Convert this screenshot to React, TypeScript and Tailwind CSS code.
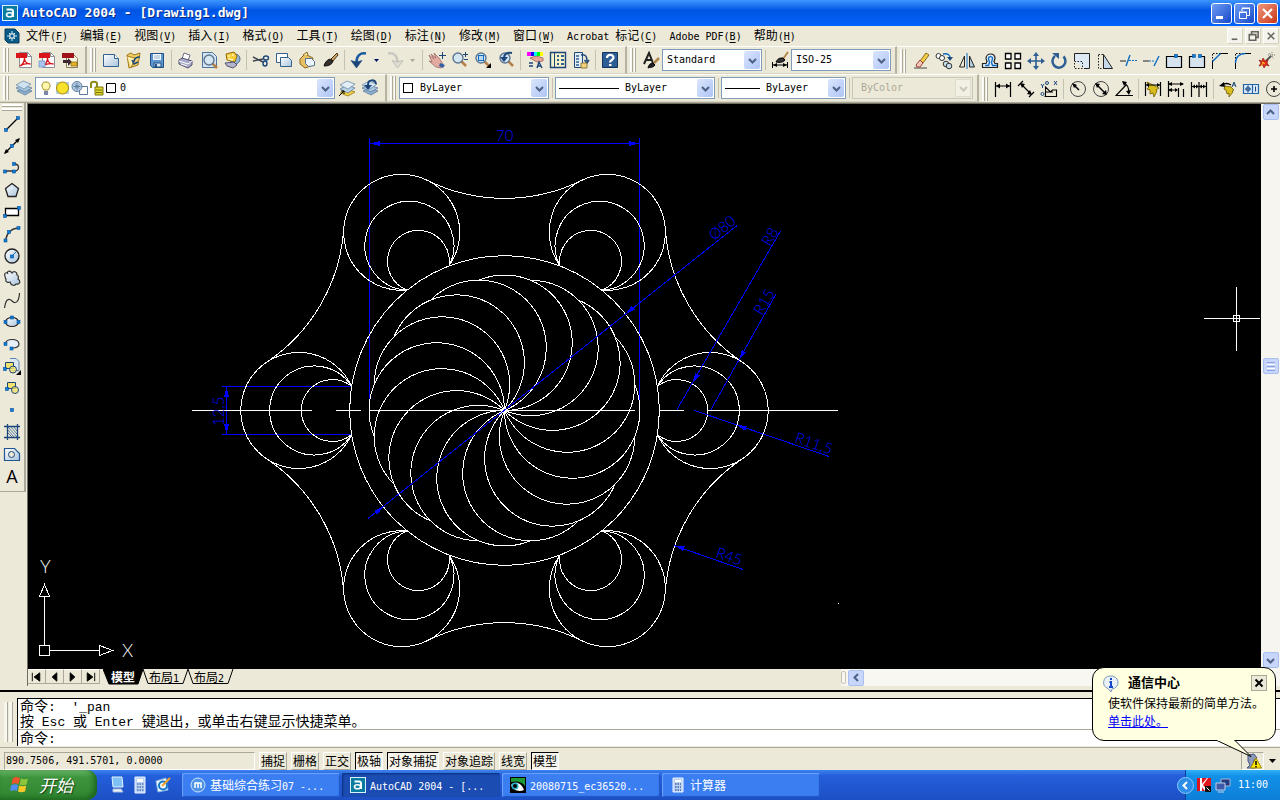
import React from 'react';

/* ---------- text helpers ---------- */

// Latin runs use the narrow fixed pitch face, CJK runs keep the parent size
const Mixed: React.FC<{ text: string; size?: 'sm' | 'lg' }> = ({ text, size = 'sm' }) => (
  <>
    {text.split(/([\u3000-\uffff]+)/).map((part, i) =>
      i % 2 === 1 ? (
        <span key={i}>{part}</span>
      ) : (
        <span
          key={i}
          className={
            size === 'sm'
              ? "font-['DejaVu_Sans_Mono',monospace] text-[10px] whitespace-pre"
              : "font-['Liberation_Mono',monospace] text-[13px] whitespace-pre"
          }
        >
          {part}
        </span>
      )
    )}
  </>
);

/* ---------- toolbar parts ---------- */

const Grip = () => (
  <div className="flex gap-px ml-[3px] mr-[3px] w-[6px] h-6 shrink-0">
    <div className="flex-1 bg-[#f7f6ee] border-l border-white border-r border-r-[#aca899]" />
    <div className="flex-1 bg-[#f7f6ee] border-l border-white border-r border-r-[#aca899]" />
  </div>
);

const Sep = () => (
  <div className="w-[6px] shrink-0 flex justify-center">
    <div className="w-px h-5 bg-[#c5c2b0]" />
  </div>
);

const Bar: React.FC<{ children: React.ReactNode; last?: boolean }> = ({ children, last }) => (
  <div
    className={
      last
        ? 'flex items-center h-7 shrink-0 border-t border-white'
        : 'flex items-center h-7 shrink-0 pr-1 border-t border-white border-b border-b-[#d5d2c0] border-r-2 border-r-[#b5b2a2]'
    }
  >
    <Grip />
    {children}
  </div>
);

const Ico: React.FC<{ children: React.ReactNode }> = ({ children }) => (
  <svg width="18" height="18" viewBox="0 0 18 18" fill="none" stroke="#000" aria-hidden="true" className="shrink-0">
    {children}
  </svg>
);

const Tool: React.FC<{ name: string }> = ({ name }) => (
  <button aria-label={name} className="w-[23px] h-[22px] shrink-0 flex items-center justify-center">
    <Ico>{icons[name]}</Ico>
  </button>
);

const DropArrow: React.FC<{ off?: boolean }> = ({ off }) => (
  <button aria-label="More" className="w-[13px] h-5 shrink-0 flex items-center justify-center">
    <svg width="5" height="3" viewBox="0 0 5 3">
      <path d="M0 0h5L2.5 3z" fill={off ? '#aca899' : '#001060'} />
    </svg>
  </button>
);

const Chevron: React.FC<{ dir?: string; off?: boolean }> = ({ dir = 'down', off }) => (
  <svg width="9" height="9" viewBox="0 0 9 9" fill="none" stroke={off ? '#c9c7ba' : '#4d6185'} strokeWidth="2">
    <path d={dir === 'up' ? 'M1 6l3.5-3.5L8 6' : dir === 'left' ? 'M6 1L2.5 4.5 6 8' : 'M1 3l3.5 3.5L8 3'} />
  </svg>
);

const Combo: React.FC<{
  label: string;
  value: string;
  width: string;
  pad: string;
  off?: boolean;
  children?: React.ReactNode;
}> = ({ label, value, width, pad, off, children }) => (
  <div className={`relative shrink-0 h-[22px] ${width}`}>
    <select
      aria-label={label}
      disabled={off}
      className={`appearance-none w-full h-full border font-['DejaVu_Sans_Mono',monospace] text-[10px] ${pad} ${
        off ? 'bg-[#ece9d8] border-[#c9c7ba] text-[#aca899] opacity-100' : 'bg-white border-[#7f9db9] text-black'
      }`}
    >
      <option>{value}</option>
    </select>
    <div className="absolute left-1 inset-y-0 flex items-center pointer-events-none">{children}</div>
    <div
      className={
        off
          ? 'absolute right-[2px] top-[2px] bottom-[2px] w-[16px] flex items-center justify-center pointer-events-none border border-[#dedccc] bg-[#f3f1e6]'
          : 'absolute right-[2px] top-[2px] bottom-[2px] w-[16px] flex items-center justify-center pointer-events-none rounded-[2px] bg-linear-to-br from-[#dbe6fd] to-[#aec4f4]'
      }
    >
      <Chevron off={off} />
    </div>
  </div>
);

/* ---------- icons, drawn on an 18 unit grid ---------- */

const blue = '#0b6cc4';
const navy = '#1c4679';

const dot = (x: number, y: number) => (
  <rect x={x - 1.5} y={y - 1.5} width="3" height="3" fill="#0a80dc" stroke="#0b4f98" strokeWidth=".6" />
);
const pdfPage = (
  <>
    <path d="M4.5 1.5h8l4 4v11h-12z" fill="#fff" stroke="#8a8f98" />
    <path d="M12.5 1.5v4h4" stroke="#8a8f98" />
    <path d="M1 2h11v5H1z" fill="#d9141a" stroke="none" />
    <path d="M5 15c3-2 4.5-5 4.5-8 0 4 3 6 6 6-3.5-.8-7 0-10.5 2z" stroke="#d9141a" strokeWidth="1.3" />
  </>
);
const lens = (x: number, y: number) => (
  <>
    <path d={`M${x + 3} ${y + 3}l5 5`} stroke="#b6804a" strokeWidth="2.5" />
    <circle cx={x} cy={y} r="5" fill="#d5e6f3" stroke="#5d7690" strokeWidth="1.4" />
  </>
);
const stack = (
  <>
    <path d="M2 12l7-3 8 3-7 4z" fill="#8fb0cf" stroke="#5d7f9f" strokeWidth=".8" />
    <path d="M1 9l7-3 9 3-7 4z" fill="#a9c5de" stroke="#5d7f9f" strokeWidth=".8" />
    <path d="M1 6l7-4 8 3-7 5z" fill="#d0e2f0" stroke="#6f8ead" strokeWidth=".8" />
  </>
);

const icons: Record<string, React.ReactNode> = {
  pdf: pdfPage,
  pdfMail: (
    <>
      {pdfPage}
      <path d="M1 10h6v6H1z" fill="#aac6ee" stroke="#6e93c8" strokeWidth=".7" />
    </>
  ),
  pdfReview: (
    <>
      <path d="M5.5 3.5h7l4 4v9h-11z" fill="#f8f4e2" stroke="#8a7d55" />
      <path d="M1 2h12v5H1z" fill="#a01218" stroke="none" />
      <path d="M2 9h5V7l4 4-4 4v-3H2z" fill="#3c2430" stroke="none" />
      <path d="M10 11h6v4h-6z" fill="#e6b325" stroke="#86640b" strokeWidth=".7" />
    </>
  ),
  new: (
    <>
      <path d="M1.5 3.5h11l4 4v8h-15z" fill="url(#paper)" stroke="#33608c" />
      <path d="M12.5 3.5v4h4" stroke="#33608c" fill="#fff" />
    </>
  ),
  open: (
    <>
      <path d="M2 4l4-2 3 2 6-2-2 12-9 3z" fill="#f0cf68" stroke="#a17817" />
      <path d="M2 5l8 2-4 10" fill="#fff0ae" stroke="#a17817" />
      <path d="M15 6c-5 0-6 3-6 5M7 9l2 4 4-2" stroke={navy} strokeWidth="1.5" />
    </>
  ),
  save: (
    <>
      <path d="M2.5 2.5h13v14h-11l-2-2z" fill="#5d96cf" stroke="#235086" />
      <path d="M5 3h8v6H5z" fill="#f4f9ff" stroke="none" />
      <path d="M6 5h6M6 7h6" stroke="#9cb6cf" />
      <path d="M6 12h7v4H6z" fill="#d9e6f2" stroke="#235086" />
      <path d="M8 13v3" stroke="#235086" strokeWidth="2" />
    </>
  ),
  print: (
    <>
      <path d="M5 8l2-6 6 2-2 6z" fill="#fff" stroke="#6d6d88" />
      <path d="M2 9l3-2 10 3v4l-4 3-9-4z" fill="#a9a9c9" stroke="#4f4f70" />
      <path d="M2 10l9 3 4-3M4 13l6 2" stroke="#fff" />
    </>
  ),
  preview: (
    <>
      <path d="M2.5 1.5h10l4 4v11h-14z" fill="#d4e6f5" stroke="#4d7399" />
      {lens(9, 9)}
    </>
  ),
  publish: (
    <>
      <circle cx="12" cy="8" r="5" fill="#93b7dc" stroke="#516a80" />
      <path d="M3 3l8-2 3 4-2 6-8-2z" fill="#f6ce38" stroke="#90690b" />
      <path d="M5 5h2M9 4h2M5 8l5 1" stroke="#fff3bf" strokeWidth="1.5" />
      <path d="M2 12l9-1 3 3-4 3-6-2z" fill="#b5b5ce" stroke="#555572" />
    </>
  ),
  cut: (
    <>
      <path d="M1 6l10 5M1 10l10-2" stroke="#3c4350" strokeWidth="1.5" />
      <ellipse cx="14" cy="7" rx="2.5" ry="2" stroke={navy} strokeWidth="1.4" />
      <ellipse cx="13" cy="12.5" rx="2" ry="2.5" stroke={navy} strokeWidth="1.4" />
    </>
  ),
  copy: (
    <>
      <path d="M1.5 2.5h11v9h-11z" fill="#fff" stroke="#33608c" />
      <path d="M5.5 6.5h8l3 3v6h-11z" fill="url(#paper)" stroke="#33608c" />
    </>
  ),
  paste: (
    <>
      <path d="M2 8l5-5 8 4-2 8-6 2-5-4z" fill="#e7c064" stroke="#8a6a1a" />
      <path d="M5 4l4-3 1 3" fill="#f7e7a8" stroke="#8a6a1a" />
      <path d="M7.5 7.5h6l3 3v4l-6 1-3-3z" fill="#eef6fd" stroke="#54718e" />
    </>
  ),
  match: (
    <>
      <path d="M10 8l6-6 1 2-5 6z" fill="#c9a36d" stroke="#4a3418" />
      <path d="M3 15c1-4 3-6 6-7l3 2c-1 4-5 5-9 5z" fill="#33302c" stroke="#111" />
    </>
  ),
  undo: (
    <>
      <path d="M16 2.5C10 1.5 6.5 5 6.5 11" stroke="#1e5a9e" strokeWidth="2.5" />
      <path d="M1 9.5l5.5 1.5L12 9.5 6.5 17z" fill={navy} stroke={navy} strokeWidth=".6" />
    </>
  ),
  redo: (
    <>
      <path d="M2 2.5C8 1.5 11.5 5 11.5 11" stroke="#c8c8c0" strokeWidth="2.5" />
      <path d="M6 9.5l5.5 1.5L17 9.5 11.5 17z" fill="#deddd2" stroke="#c0c0b8" />
    </>
  ),
  pan: (
    <>
      <path d="M1 4l5 4-3-5 5 4-2-5 5 5 4 6-2 4-5-1-7-6 3 1z" fill="#e3aaa0" stroke="#9c6a62" strokeWidth=".8" />
      <path d="M12 12l5 2-2 3-4-2z" fill="#345fa2" stroke="none" />
      <path d="M14.5 1v7M11 4.5h7" stroke={navy} />
    </>
  ),
  zoomRt: (
    <>
      {lens(7, 7)}
      <path d="M14.5 1v5M12 3.5h5M13 8.5h4" stroke={navy} />
    </>
  ),
  zoomWin: (
    <>
      {lens(7, 7)}
      <rect x="4.5" y="4.5" width="5" height="5" fill="#bcd9f2" stroke={blue} />
      <path d="M17 12v5h-5z" fill="#000" stroke="none" />
    </>
  ),
  zoomPrev: (
    <>
      {lens(8, 7)}
      <path d="M15 2C10 1 7 3 7 7" stroke={navy} strokeWidth="2" />
      <path d="M3 6h8l-4 5z" fill={navy} stroke="none" />
    </>
  ),
  props: (
    <>
      <path d="M1 1h4v4H1z" fill="#f0f" stroke="none" />
      <path d="M5 1h3v4H5z" fill="#20f" stroke="none" />
      <path d="M8 1h3v4H8z" fill="#0ff" stroke="none" />
      <path d="M11 1h3v4h-3z" fill="#0f0" stroke="none" />
      <path d="M14 1h3v4h-3z" fill="#ff0" stroke="none" />
      <path d="M4 7l6-2 7 2v3l-6 1z" fill="#e9a79a" stroke="#9a6054" strokeWidth=".8" />
      <path d="M3 12h4M3 15h4M11 17l2-6 3 6M12 15h3" stroke={navy} strokeWidth="1.4" />
    </>
  ),
  design: (
    <>
      <path d="M1.5 1.5h15v15h-15z" fill="#f6f2c8" stroke={navy} strokeWidth="1.4" />
      <path d="M5.5 2v14" stroke={navy} />
      <path d="M8 5h2M12 5h3M8 9h2M12 9h3M8 13h2M12 13h3" stroke="#33618f" strokeWidth="2" />
    </>
  ),
  palettes: (
    <>
      <path d="M2.5 1.5h8v15h-8z" fill="#e4eef7" stroke={navy} />
      <path d="M4 5h3M4 8h3M4 11h3M4 14h3" stroke="#33618f" strokeWidth="1.5" />
      <path d="M9 4c5-1 6 2 6 6M12.5 9l2.5 3 2-3" stroke={navy} strokeWidth="1.5" />
      <path d="M9 12h6v5H9z" fill="#f1d27a" stroke="#7a6426" strokeWidth=".8" />
    </>
  ),
  help: (
    <>
      <path d="M1.5 1.5h15v15h-15z" fill="#2e5e93" stroke="#12355f" />
      <path d="M6 7c0-4 6.5-4 6.5-.5C12.5 9 9 9 9 11.5" stroke="#fff" strokeWidth="2.2" />
      <path d="M8 13h2.5v2H8z" fill="#fff" stroke="none" />
    </>
  ),
  textStyle: (
    <>
      <path d="M2 13L7 2l4 10M4 9h6" stroke="#222" strokeWidth="2" />
      <path d="M17 7l-5 5" stroke="#b3854d" strokeWidth="2.5" />
      <path d="M6 17c1-4 3-5 5-5l2 2c-2 3-5 2-7 3z" fill="#222" />
    </>
  ),
  dimStyle: (
    <>
      <path d="M17 1l-5 7" stroke="#b3854d" strokeWidth="2" />
      <path d="M5 11c2-4 4-4 7-4l2 2c-1 2-5 3-9 2z" fill="#333" />
      <path d="M1.5 11v6M16.5 11v6M2 14h14" />
      <path d="M2 14l4-2v4zM16 14l-4-2v4z" fill="#000" stroke="none" />
    </>
  ),
  erase: (
    <>
      <path d="M2 16h13" stroke="#444" />
      <path d="M8 9l6-8 3 2-6 8z" fill="#f5cb4a" stroke="#8f6d15" />
      <path d="M4 13l4-5 3 3-3 4H5z" fill="#f6c9bc" stroke="#9c3c30" />
    </>
  ),
  dup: (
    <>
      <circle cx="3.5" cy="4" r="2.5" fill="#fff" stroke="#333" />
      <circle cx="7" cy="6" r="2.5" fill="#fff" stroke="#333" />
      <circle cx="11" cy="12" r="2.8" fill="#c6daea" stroke="#333" />
      <circle cx="14" cy="14" r="2.8" fill="#c6daea" stroke="#333" />
      <path d="M8 2c5-1 7 1 7 4" stroke={blue} strokeWidth="1.5" />
      <path d="M12 5h6l-3 4z" fill={navy} stroke="none" />
    </>
  ),
  mirror: (
    <>
      <path d="M6.5 4v11H1.5z" stroke="#222" />
      <path d="M11.5 4v11h5z" fill="#b5cfe5" stroke="#222" />
      <path d="M9 1v16" stroke={blue} />
    </>
  ),
  offset: (
    <>
      <path d="M1.5 15.5v-4H5l1-2-1-3c0-6 9-6 9 0l-1 3 1 2h2.5v4z" fill="#dfe9f2" stroke="#222" strokeWidth="1.2" />
      <path d="M4 13.5h3.5l1-3-1-4c0-2.5 4-2.5 4 0l-1 4 1 3H16" stroke={blue} strokeWidth="1.3" />
    </>
  ),
  array: (
    <path
      d="M1.5 1.5H7V7H1.5zM11 1.5h5.5V7H11zM1.5 11H7v5.5H1.5zM11 11h5.5v5.5H11z"
      fill="#fff"
      strokeWidth="1.3"
    />
  ),
  move: (
    <>
      <path d="M9 2v14M2 9h14" stroke="#2e5e93" strokeWidth="1.6" />
      <path d="M9 0l3 4H6zM9 18l3-4H6zM0 9l4-3v6zM18 9l-4-3v6z" fill="#2e5e93" stroke="none" />
    </>
  ),
  rotate: (
    <>
      <path d="M5 4a6.5 6.5 0 1 0 8.5.5" stroke="#2e5e93" strokeWidth="2.5" />
      <path d="M2 1h7v6z" fill="#2e5e93" stroke="none" />
    </>
  ),
  scale: (
    <>
      <path d="M1.5 9V1.5h15v15H11" fill="#dde9f3" stroke="#222" />
      <path d="M1.5 9.5h8v7h-8z" stroke="#222" strokeDasharray="1.5 1.5" />
    </>
  ),
  stretch: (
    <>
      <path d="M2.5 2.5h5v14h-5z" stroke="#222" strokeDasharray="1.5 1.5" />
      <path d="M7.5 2.5l9 14h-9z" fill="#c6daea" stroke="#222" />
    </>
  ),
  trim: (
    <>
      <path d="M1 9h6" stroke="#222" />
      <path d="M7 14l4-11" stroke={blue} strokeWidth="1.4" />
      <path d="M10 8.5h8" stroke={blue} strokeDasharray="2 1" />
    </>
  ),
  extend: (
    <>
      <path d="M1 9h6" stroke="#222" />
      <path d="M7 9h6" stroke={blue} strokeDasharray="2 1" />
      <path d="M12 14l5-10" stroke={blue} strokeWidth="1.4" />
    </>
  ),
  breakPt: (
    <>
      <path d="M1.5 4.5h15v11h-15z" fill="#d5e3ef" strokeWidth="1.2" />
      {dot(11, 4)}
    </>
  ),
  breakAt: (
    <>
      <path d="M6 4.5H1.5v11h15v-11H12" fill="#d5e3ef" strokeWidth="1.2" />
      {dot(6, 4)}
      {dot(12, 4)}
    </>
  ),
  chamfer: (
    <>
      <path d="M2 1.5h8M1.5 2v8" strokeDasharray="1.5 1.5" />
      <path d="M1.5 17V9M9 1.5h8" />
      <path d="M1.5 9.5l8-8" stroke={blue} strokeWidth="1.4" />
    </>
  ),
  fillet: (
    <>
      <path d="M2 1.5h8M1.5 2v8" strokeDasharray="1.5 1.5" />
      <path d="M1.5 17v-6M11 1.5h6" />
      <path d="M1.5 11c0-6 4-9.5 10-9.5" stroke={blue} strokeWidth="1.4" />
    </>
  ),
  explode: (
    <>
      <path d="M14 4l-5 5" stroke="#555" strokeWidth="2" />
      <path d="M2 8l3 1 1-3 2 3 3-1-1 3 2 3-3-1-2 3-1-3-4 1 2-3z" fill="#e2271b" stroke="#8f1c0d" strokeWidth=".7" />
      <path d="M5 10l3 2M4 14l3-4" stroke="#ffc21a" />
      <path d="M11 3h7M12 1l5 6M15 0v6" stroke="#7a7a7a" strokeDasharray="1 1" />
    </>
  ),
  layers: stack,
  layerMake: (
    <>
      <path d="M2 14l7-4 8 3-7 4z" fill="#f1cf3d" stroke="#957b16" strokeWidth=".8" />
      <path d="M2 10l7-4 8 3-7 5z" fill="#b9d0e4" stroke="#5d7f9f" strokeWidth=".8" />
      <path d="M2 6l7-4 8 3-7 5z" fill="#e3eef7" stroke="#6f8ead" strokeWidth=".8" />
      <path d="M1 17l5-5M3 12h3v3" stroke="#000" />
    </>
  ),
  layerPrev: (
    <>
      {stack}
      <path d="M15 5C14 0 7 0 7 6" stroke={navy} strokeWidth="2" />
      <path d="M3 6h8l-4 5z" fill={navy} stroke="none" />
    </>
  ),
  dLinear: (
    <>
      <path d="M1.5 2v15M16.5 2v15M2 6h14" strokeWidth="1.2" />
      <path d="M2 6l4-2.5v5zM16 6l-4-2.5v5z" fill="#000" stroke="none" />
    </>
  ),
  dAligned: (
    <>
      <path d="M1 6l5-5M12 17l5-5M4 4l10 10" strokeWidth="1.2" />
      <path d="M3 3l5 1-3 4zM15 15l-5-1 3-4z" fill="#000" stroke="none" />
    </>
  ),
  dOrdinate: (
    <>
      <path d="M5.5 16.5V7l5 5 2-2h4v6.5h-12M5 12h8" strokeWidth="1.1" />
      <path d="M1 4l1.5 2L4 4M2.5 6v2M14 1l3 4M17 1l-3 4" stroke={navy} />
      <circle cx="7" cy="3" r="1.5" stroke={navy} />
      <circle cx="2.5" cy="14" r="1.5" stroke={navy} />
    </>
  ),
  dRadius: (
    <>
      <circle cx="9" cy="9" r="7.5" stroke="#444" />
      <path d="M10 10L5 5" strokeWidth="1.5" />
      <path d="M3 3l5 2-3 3z" fill="#000" stroke="none" />
    </>
  ),
  dDiameter: (
    <>
      <circle cx="9" cy="9" r="7.5" stroke="#444" />
      <path d="M5 5l8 8" strokeWidth="1.5" />
      <path d="M3 3l5 1-3 4zM15 15l-5-1 4-4z" fill="#000" stroke="none" />
    </>
  ),
  dAngular: (
    <>
      <path d="M18 15.5H1L11 5M8 2c4 2 6 6 6 11" strokeWidth="1.2" />
      <path d="M7 1l5 1-3 4zM14 15l-3-4 5-1z" fill="#000" stroke="none" />
    </>
  ),
  dQuick: (
    <>
      <path d="M3 2l6 3 6 3-3 2 1 1-3 6-1-4-3 1v-4L3 9l2-2z" fill="#d9bd1c" stroke="#6e5a00" strokeWidth=".8" />
      <path d="M1.5 2v14M16.5 2v14M2 5h14" strokeWidth="1.2" />
      <path d="M2 5l3-2v4zM16 5l-3-2v4z" fill="#000" stroke="none" />
    </>
  ),
  dBaseline: (
    <>
      <path d="M1.5 1v16M2 4h14M2 10h8M11.5 8v9M16.5 9v8" strokeWidth="1.2" />
      <path d="M1 4l4-2v4zM17 4l-4-2v4zM1 10l4-2v4zM11 10L8 8v4z" fill="#000" stroke="none" />
    </>
  ),
  dContinue: (
    <>
      <path d="M1.5 2v15M9 2v15M16.5 2v15M2 6.5h14" strokeWidth="1.2" />
      <path d="M2 6.5l3-2v4zM9 6.5l-3-2v4zM9 6.5l3-2v4zM16 6.5l-3-2v4z" fill="#000" stroke="none" />
    </>
  ),
  leader: (
    <>
      <path d="M6 6l6 1 3 3-2 1 1 1-4 5v-4l-2 1-1-4-2-1z" fill="#d9bd1c" stroke="#6e5a00" strokeWidth=".8" />
      <path d="M3 5c3-2 6-2 9 0" strokeWidth="1.3" />
      <path d="M0 6l5-4 1 5z" fill="#000" stroke="none" />
      <path d="M13 7l2-5 2 5M14 5h2" stroke={navy} />
    </>
  ),
  tolerance: (
    <>
      <path d="M1.5 4.5h15v9h-15zM10.5 5v8" fill="#d7e9fb" stroke="#2465a8" strokeWidth="1.2" />
      <circle cx="6" cy="9" r="2" stroke="#2465a8" />
      <path d="M6 5.5v7M3 9h6M13.5 6.5v5" stroke={navy} />
    </>
  ),
  center: (
    <>
      <circle cx="9" cy="9" r="7.5" stroke="#444" />
      <path d="M9 6v6M6 9h6" strokeWidth="1.6" />
    </>
  ),
  line: (
    <>
      <path d="M3 15L15 3" strokeWidth="1.2" />
      {dot(3, 15)}
      {dot(15, 3)}
    </>
  ),
  xline: (
    <>
      <path d="M2 16L16 2" strokeWidth="1.2" />
      <path d="M1 17l2-5 3 3zM17 1l-2 5-3-3z" fill="#000" stroke="none" />
      {dot(9, 9)}
    </>
  ),
  pline: (
    <>
      <path d="M2 12h9c6 0 6-7 0-7" stroke="#333" strokeWidth="1.3" />
      {dot(2, 12.5)}
      {dot(11, 12.5)}
      {dot(11, 5)}
    </>
  ),
  polygon: <path d="M9 2.5l6.5 5-2.5 8H5l-2.5-8z" fill="url(#paper)" stroke="#222" strokeWidth="1.3" />,
  rect: (
    <>
      <path d="M2.5 5.5h13v7h-13z" fill="#fff" strokeWidth="1.3" />
      {dot(2, 13)}
      {dot(16, 5)}
    </>
  ),
  arc: (
    <>
      <path d="M2.5 15C4 8 8 3.5 15 3" stroke="#333" strokeWidth="1.3" />
      {dot(2.5, 15.5)}
      {dot(6, 7)}
      {dot(15.5, 3)}
    </>
  ),
  circle: (
    <>
      <circle cx="9" cy="9" r="7" fill="url(#paper)" stroke="#222" strokeWidth="1.3" />
      <path d="M9 9l4-4" stroke={blue} />
      {dot(9, 9.5)}
    </>
  ),
  cloud: (
    <path
      d="M5 5c-2-3-4 0-3 2 0 2 0 2 1 3-1 3 2 4 4 3 1 4 5 4 6 2 4 1 5-3 2-5 1-2 0-4-1-4 0-4-4-4-5-2-2-3-6-2-4 1z"
      fill="url(#paper)"
      stroke="#333"
      strokeWidth="1.2"
    />
  ),
  spline: <path d="M1.5 17C3 6 7 8 9 10c3 3 7 2 7.5-8" stroke="#333" strokeWidth="1.2" />,
  ellipse: (
    <>
      <ellipse cx="9" cy="9" rx="6.5" ry="4.5" fill="url(#paper)" stroke="#222" strokeWidth="1.2" />
      {dot(2.5, 9)}
      {dot(15.5, 9)}
      {dot(9, 4.5)}
    </>
  ),
  earc: (
    <>
      <path d="M2.5 9c0-6 13-6 13.5 0 0 3-3 4-7 4" fill="#e6eff7" stroke="#333" strokeWidth="1.2" />
      {dot(2.5, 9)}
      {dot(8.5, 13.5)}
    </>
  ),
  insert: (
    <>
      <path d="M7 1.5h6l3 3v9H9" fill="#d9e8f4" stroke="#5a84ab" />
      <path d="M2.5 5.5h8v6h-8z" fill="#f3e36c" stroke={navy} />
      <circle cx="10" cy="12.5" r="3.5" fill="#f3e36c" fillOpacity=".8" stroke={navy} />
      {dot(2, 12)}
      <path d="M18 13v5h-5z" fill="#000" stroke="none" />
    </>
  ),
  block: (
    <>
      <path d="M4.5 3.5h8v6h-8z" fill="#f3e36c" stroke={navy} />
      <circle cx="12" cy="11" r="3.5" fill="#f3e36c" fillOpacity=".8" stroke={navy} />
      {dot(4, 10)}
    </>
  ),
  point: dot(9, 9),
  hatch: (
    <>
      <path d="M5 4l9 10M8 4l6 7M11 4l3 4M5 7l6 7M5 10l4 4" stroke="#2a5f94" strokeWidth=".8" />
      <path d="M4.5 1v16M14.5 1v16M1 3.5h16M1 14.5h16" stroke={navy} strokeWidth="1.3" />
    </>
  ),
  region: (
    <>
      <path d="M1.5 3.5h10l5 5v7h-15z" fill="url(#paper)" stroke="#1f5590" strokeWidth="1.2" />
      <circle cx="8.5" cy="9.5" r="3" fill="#ece9d8" stroke={navy} />
    </>
  ),
};

/* ---------- window chrome ---------- */

const AcadLogo = () => (
  <svg width="16" height="16" viewBox="0 0 16 16" aria-hidden="true">
    <rect x=".5" y=".5" width="15" height="15" fill="#087ca0" stroke="#d8f2f8" />
    <path d="M4.5 4.5H9a2 2 0 0 1 2 2V12" fill="none" stroke="#fff" strokeWidth="2" />
    <ellipse cx="7.5" cy="9.8" rx="3" ry="2" fill="none" stroke="#fff" strokeWidth="1.6" />
  </svg>
);

const TitleBar = () => (
  <header className="h-[26px] shrink-0 flex items-center justify-between pl-[2px] pr-[2px] bg-linear-to-b from-[#3d95ff] via-[#0054e3] via-40% to-[#0363fb]">
    <div className="flex items-center gap-1">
      <AcadLogo />
      <h1 className="font-['DejaVu_Sans_Mono',monospace] font-bold text-[13px] leading-[18px] text-white [text-shadow:1px_1px_#0a2a80]">
        AutoCAD 2004 - [Drawing1.dwg]
      </h1>
    </div>
    <div className="flex gap-[2px]">
      <button aria-label="Minimize" className="size-[21px] rounded-[3px] border border-white bg-linear-to-br from-[#6f9cf5] to-[#1846c8]">
        <svg viewBox="0 0 19 19">
          <path d="M4 12h7v3H4z" fill="#fff" />
        </svg>
      </button>
      <button aria-label="Restore" className="size-[21px] rounded-[3px] border border-white bg-linear-to-br from-[#6f9cf5] to-[#1846c8]">
        <svg viewBox="0 0 19 19" fill="none" stroke="#fff">
          <path d="M7 7V4.5h7.5v7H12M7 4h8" />
          <path d="M4.5 8.5h7v6h-7zM4 8h8" />
        </svg>
      </button>
      <button aria-label="Close" className="size-[21px] rounded-[3px] border border-white bg-linear-to-br from-[#f0957a] to-[#c8320c]">
        <svg viewBox="0 0 19 19" stroke="#fff" strokeWidth="2.2">
          <path d="M5 5l9 9M14 5l-9 9" />
        </svg>
      </button>
    </div>
  </header>
);

const menus: [string, string][] = [
  ['文件', 'F'],
  ['编辑', 'E'],
  ['视图', 'V'],
  ['插入', 'I'],
  ['格式', 'O'],
  ['工具', 'T'],
  ['绘图', 'D'],
  ['标注', 'N'],
  ['修改', 'M'],
  ['窗口', 'W'],
  ['Acrobat 标记', 'C'],
  ['Adobe PDF', 'B'],
  ['帮助', 'H'],
];

const MenuBar = () => (
  <nav className="h-5 shrink-0 flex items-center justify-between pl-1">
    <div className="flex items-center gap-[6px]">
      <svg width="16" height="16" viewBox="0 0 16 16" aria-hidden="true">
        <path d="M1 1h10l4 4v10H4l-3-3z" fill="#0a5a86" stroke="#0b3f60" />
        <path d="M8 3v10M3 8h10M5 5l6 6M11 5l-6 6" stroke="#c8f0ff" />
        <rect x="6" y="6" width="4" height="4" fill="#0a5a86" stroke="#fff" />
      </svg>
      <div className="flex items-baseline gap-3">
        {menus.map(([name, key]) => (
          <button key={key} className="leading-4">
            <Mixed text={name} />
            <span className="font-['DejaVu_Sans_Mono',monospace] text-[10px]">
              (<span className="underline underline-offset-2">{key}</span>)
            </span>
          </button>
        ))}
      </div>
    </div>
    <div className="flex gap-[2px] pr-px">
      {[
        ['Minimize drawing', 'M4 11h6'],
        ['Restore drawing', 'M6 5V3h7v6h-2M3.5 6h7v6h-7z'],
        ['Close drawing', 'M4 4l7 7M11 4l-7 7'],
      ].map(([label, d]) => (
        <button key={label} aria-label={label} className="size-4 bg-[#f5f4ec] border border-white border-r-[#d5d2c0] border-b-[#d5d2c0]">
          <svg viewBox="0 0 15 15" fill="none" stroke="#66645c" strokeWidth="1.7">
            <path d={d} />
          </svg>
        </button>
      ))}
    </div>
  </nav>
);

const standardTools = [
  ['new', 'open', 'save'],
  ['print', 'preview', 'publish'],
  ['cut', 'copy', 'paste', 'match'],
];
const modifyTools = [
  'erase', 'dup', 'mirror', 'offset', 'array', 'move', 'rotate', 'scale',
  'stretch', 'trim', 'extend', 'breakPt', 'breakAt', 'chamfer', 'fillet', 'explode',
];
const drawTools = [
  'line', 'xline', 'pline', 'polygon', 'rect', 'arc', 'circle', 'cloud',
  'spline', 'ellipse', 'earc', 'insert', 'block', 'point', 'hatch', 'region',
];

const tools = (names: string[]) => names.map((n) => <Tool key={n} name={n} />);

const Toolbars = () => (
  <div className="shrink-0 overflow-hidden border-b border-[#aca899]">
    <div className="flex">
      <Bar>{tools(['pdf', 'pdfMail', 'pdfReview'])}</Bar>
      <Bar>
        {standardTools.map((group) => (
          <React.Fragment key={group[0]}>
            {tools(group)}
            <Sep />
          </React.Fragment>
        ))}
        <Tool name="undo" />
        <DropArrow />
        <Tool name="redo" />
        <DropArrow off />
        <Sep />
        {tools(['pan', 'zoomRt', 'zoomWin', 'zoomPrev'])}
        <Sep />
        {tools(['props', 'design', 'palettes'])}
        <Sep />
        <Tool name="help" />
      </Bar>
      <Bar>
        <Tool name="textStyle" />
        <Combo label="Text style" value="Standard" width="w-[100px]" pad="pl-1" />
        <Sep />
        <Tool name="dimStyle" />
        <Combo label="Dimension style" value="ISO-25" width="w-[100px]" pad="pl-1" />
      </Bar>
      <Bar last>{tools(modifyTools)}</Bar>
    </div>
    <div className="flex">
      <Bar>
        <Tool name="layers" />
        <Combo label="Layer" value="0" width="w-[300px]" pad="pl-[84px]">
          <svg width="78" height="18" viewBox="0 0 78 18" fill="none">
            <path d="M5 11c-3-3-3-8 2-8s5 5 2 8z" fill="#fff7b0" stroke="#a08a20" />
            <path d="M5 13h4M5 15h4" stroke="#50608a" strokeWidth="1.5" />
            <path d="M17 3h13v12H17z" fill="#b8d3e8" />
            <circle cx="23.5" cy="9" r="6" fill="#f8e22a" stroke="#a58c10" />
            <path d="M40.5 7.5h8v8h-8z" fill="#fff" stroke="#5c7da0" />
            <circle cx="38" cy="7.5" r="5" fill="#b5cbe0" stroke="#5c7da0" />
            <path d="M38 4v7M34.5 7.5h7M36 5.5l4 4M40 5.5l-4 4" stroke="#5c7da0" />
            <path d="M52 9V5c0-3 6-3 6 0v3" stroke="#8d8a17" strokeWidth="2" />
            <path d="M56 8h8v8h-8z" fill="#ded62a" stroke="#77730a" />
            <path d="M57 11h6M57 13.5h6" stroke="#77730a" />
            <path d="M67.5 4.5h9v9h-9z" fill="#fff" stroke="#000" />
          </svg>
        </Combo>
        {tools(['layerMake', 'layerPrev'])}
      </Bar>
      <Bar>
        <Combo label="Color" value="ByLayer" width="w-[150px]" pad="pl-5">
          <span className="size-[10px] border border-black bg-white" />
        </Combo>
        <Sep />
        <Combo label="Linetype" value="ByLayer" width="w-[160px]" pad="pl-[69px]">
          <span className="w-[60px] h-px bg-black" />
        </Combo>
        <Sep />
        <Combo label="Lineweight" value="ByLayer" width="w-[125px]" pad="pl-[44px]">
          <span className="w-[35px] h-px bg-black" />
        </Combo>
        <Sep />
        <Combo label="Plot style" value="ByColor" width="w-[121px]" pad="pl-2" off />
      </Bar>
      <Bar last>
        {tools(['dLinear', 'dAligned', 'dOrdinate'])}
        <Sep />
        {tools(['dRadius', 'dDiameter', 'dAngular'])}
        <Sep />
        {tools(['dQuick', 'dBaseline', 'dContinue'])}
        <Sep />
        {tools(['leader', 'tolerance', 'center'])}
      </Bar>
    </div>
  </div>
);

const DrawBar = () => (
  <aside className="w-[26px] self-start flex flex-col items-center pt-px pb-1 border-r-2 border-b border-[#aca899]">
    <div className="w-5 h-[7px] mb-[2px] flex flex-col gap-px">
      <div className="flex-1 bg-white border-b border-[#aca899]" />
      <div className="flex-1 bg-white border-b border-[#aca899]" />
    </div>
    {tools(drawTools)}
    <button aria-label="Text" className="h-[22px] font-['Open_Sans',sans-serif] text-lg leading-[22px]">
      A
    </button>
  </aside>
);

/* ---------- drawing ---------- */

const CX = 504.5;
const CY = 410.5;
const U = 3.87; // screen units per drawing unit

const polar = (r: number, deg: number, cx = CX, cy = CY) => {
  const a = (deg * Math.PI) / 180;
  return [cx + r * Math.cos(a), cy - r * Math.sin(a)];
};
const pt = (p: number[]) => `${p[0].toFixed(2)} ${p[1].toFixed(2)}`;

const R = 40 * U;
const half = 6.25 * U;
const chordAngle = (Math.asin(half / R) * 180) / Math.PI;
const chordDist = Math.sqrt(R * R - half * half);
const lobeDist = (r: number) => chordDist + Math.sqrt(r * r - half * half);

const lobes = [0, 60, 120, 180, 240, 300].flatMap((a) =>
  [8, 11.5, 15].map((r) => {
    const s = (r * U).toFixed(2);
    return `M${pt(polar(R, a + chordAngle))}A${s} ${s} 0 1 1 ${pt(polar(R, a - chordAngle))}`;
  })
);

// R45 arcs touch the R15 circles a quarter of the way between the two centres
const joins = [30, 90, 150, 210, 270, 330].map((a) => {
  const d = lobeDist(15 * U);
  const big = (45 * U).toFixed(2);
  const s = Math.sin(Math.PI / 6) * d;
  const c = Math.cos(Math.PI / 6) * d + Math.sqrt((60 * U) ** 2 - s * s);
  const o = polar(c, a);
  const touch = (lobe: number) => {
    const l = polar(d, lobe);
    return [l[0] + (o[0] - l[0]) * 0.25, l[1] + (o[1] - l[1]) * 0.25];
  };
  return `M${pt(touch(a - 30))}A${big} ${big} 0 0 1 ${pt(touch(a + 30))}`;
});

const blades = Array.from({ length: 16 }, (_, i) => {
  const a = i * 22.5;
  const r = (17.5 * U).toFixed(2);
  const start = polar(35 * U * Math.cos(Math.PI / 16), a + 11.25);
  return `M${pt(start)}A${r} ${r} 0 1 1 ${CX} ${CY}`;
});

const Arrow: React.FC<{ x: number; y: number; a: number }> = ({ x, y, a }) => (
  <path d="M0 0L10 -2.5V2.5z" fill="#00f" stroke="none" transform={`translate(${x} ${y}) rotate(${a})`} />
);

const Dim: React.FC<{ x: number; y: number; a: number; children: React.ReactNode }> = ({ x, y, a, children }) => (
  <text
    transform={`translate(${x} ${y}) rotate(${a})`}
    fill="#00f"
    stroke="none"
    className="font-['Lato',sans-serif] font-light text-[15px]"
  >
    {children}
  </text>
);

const Drawing = () => (
  <svg
    width="1233"
    height="565"
    viewBox="28 104 1233 565"
    fill="none"
    stroke="#fff"
    shapeRendering="crispEdges"
    className="block"
    role="img"
    aria-label="Drawing1"
  >
    <g stroke="#00f">
      <path d="M369.5 138v272M639.5 138v272M370 143.5h269M222 386.5h129M222 434.5h129M226.5 387v47" />
    </g>
    <circle cx={CX} cy={CY} r={R} />
    {[...lobes, ...joins, ...blades].map((d) => (
      <path key={d} d={d} />
    ))}
    <path d="M192 410.5h120M336 410.5h25M369 410.5h266M659 410.5h25M694 410.5h1M708 410.5h130M639.5 408v8M838 603.5h1" />
    <g stroke="#00f">
      <path d="M368 518.5L737 225.5M677 409.5L780.5 231M711 409.5L776 294M694.5 410.5L829 456.5M674 545.5L743 569.5" />
      <Arrow x={370} y={143.5} a={0} />
      <Arrow x={639} y={143.5} a={180} />
      <Arrow x={226.5} y={387} a={90} />
      <Arrow x={226.5} y={434} a={-90} />
      <Arrow x={625.5} y={314} a={-38.4} />
      <Arrow x={383.5} y={506.5} a={141.6} />
      <Arrow x={692.5} y={383} a={-60} />
      <Arrow x={739} y={360} a={-60} />
      <Arrow x={736.5} y={425} a={19} />
      <Arrow x={674.5} y={545.5} a={19} />
    </g>
    <Dim x={496} y={141} a={0}>70</Dim>
    <Dim x={224} y={426} a={-90}>12,5</Dim>
    <Dim x={714} y={241} a={-38.4}>Ø80</Dim>
    <Dim x={770} y={247} a={-60}>R8</Dim>
    <Dim x={762} y={316} a={-60}>R15</Dim>
    <Dim x={794} y={442} a={19}>R11,5</Dim>
    <Dim x={715} y={557} a={19}>R45</Dim>
    {/* axes */}
    <path d="M39.5 645.5h10v10h-10zM44.5 645v-48M39.5 596.5h10l-5-12zM50 650.5h49M99.5 645.5v10l13-5z" />
    <g fill="#fff" stroke="none" className="font-['Lato',sans-serif] font-light text-[18px]">
      <text x="40" y="573">Y</text>
      <text x="122" y="657">X</text>
    </g>
    {/* crosshair */}
    <path d="M1236.5 287v29M1236.5 321v30M1204 318.5h30M1239 318.5h21M1233.5 315.5h6v6h-6zM1236.5 316v5M1234 318.5h5" />
  </svg>
);

const ScrollButton: React.FC<{ dir: string }> = ({ dir }) => (
  <button
    aria-label={`Scroll ${dir}`}
    className="size-4 shrink-0 rounded-[2px] border border-[#a9bff0] bg-[#c8d6fb] flex items-center justify-center"
  >
    <Chevron dir={dir} />
  </button>
);

const VScroll = () => (
  <div className="w-[19px] shrink-0 flex flex-col items-center justify-between pb-px bg-[#f6f5f0]">
    <ScrollButton dir="up" />
    <div className="size-4 -mt-10 rounded-[2px] border border-[#a9bff0] bg-[#c8d6fb] flex flex-col justify-center gap-px px-[3px]">
      <i className="h-px bg-[#8aa3e0]" />
      <i className="h-px bg-white" />
      <i className="h-px bg-[#8aa3e0]" />
      <i className="h-px bg-white" />
      <i className="h-px bg-[#8aa3e0]" />
    </div>
    <ScrollButton dir="down" />
  </div>
);

const navShapes = ['M3 3v9M11 3v9L5 7.5z', 'M10 3v9L5 7.5z', 'M5 3v9l5-4.5z', 'M4 3v9l6-4.5zM12 3v9'];

const SheetTabs = () => (
  <div className="h-[17px] shrink-0 flex">
    <div className="flex-[813] flex min-w-0">
      {navShapes.map((d, i) => (
        <button
          key={d}
          aria-label={['First sheet', 'Previous sheet', 'Next sheet', 'Last sheet'][i]}
          className="w-[18px] h-[15px] flex justify-center border-r border-b border-[#aca899] border-t border-t-white"
        >
          <svg width="15" height="14" viewBox="0 0 15 15" fill="#000" stroke="#000">
            <path d={d} />
          </svg>
        </button>
      ))}
      {[
        ['模型', 'M0 0h40l-5 15H6z'],
        ['布局1', 'M0 0l5 14.5h35L45 0'],
        ['布局2', 'M0 0l5 14.5h35L45 0'],
      ].map(([name, d], i) => (
        <button
          key={name}
          className={i === 0 ? 'relative w-10 ml-[3px] text-white' : 'relative w-[45px] pl-[6px] text-left text-black'}
        >
          <svg width="46" height="16" viewBox="0 0 46 16" className="absolute left-0 top-0" aria-hidden="true">
            <path d={d} fill={i === 0 ? '#000' : '#ece9d8'} stroke="#000" />
          </svg>
          <span className={i === 0 ? 'relative block font-bold leading-[14px]' : 'relative block leading-[14px]'}>
            <Mixed text={name} />
          </span>
        </button>
      ))}
    </div>
    <div className="flex-[439] flex items-center gap-[2px] bg-[#f8f7f2]">
      <i className="w-[5px] h-[13px] border border-[#c5c2b0] rounded-[2px]" />
      <ScrollButton dir="left" />
    </div>
  </div>
);

/* ---------- bottom area ---------- */

const CommandPane = () => (
  <section className="shrink-0 mt-1 pt-[6px] flex items-stretch border-t-2 border-black">
    <div className="w-[9px] mx-1 mt-1 mb-1 flex gap-px">
      <div className="flex-1 bg-[#f7f6ee] border-r border-[#aca899]" />
      <div className="flex-1 bg-[#f7f6ee] border-r border-[#aca899]" />
    </div>
    <div className="flex-1 min-w-0 bg-white border-t border-l border-black text-sm">
      <div className="pl-[2px] h-[30px] whitespace-nowrap">
        <p className="h-[15px] leading-[13px]">
          <Mixed size="lg" text={"命令:  '_pan"} />
        </p>
        <p className="h-[15px] leading-[13px]">
          <Mixed size="lg" text="按 Esc 或 Enter 键退出，或单击右键显示快捷菜单。" />
        </p>
      </div>
      <div className="h-[17px] flex items-center pl-[2px] border-t border-[#aca899]">
        <label htmlFor="cmd" className="leading-[14px]">
          <Mixed size="lg" text="命令:" />
        </label>
        <input id="cmd" className="flex-1 h-[14px] px-1 outline-none font-['Liberation_Mono',monospace] text-[13px]" />
      </div>
    </div>
  </section>
);

const modes: [string, boolean][] = [
  ['捕捉', false],
  ['栅格', false],
  ['正交', false],
  ['极轴', true],
  ['对象捕捉', true],
  ['对象追踪', false],
  ['线宽', false],
  ['模型', true],
];

const StatusBar = () => (
  <footer className="h-[23px] shrink-0 flex items-center gap-1 pl-1 pt-[3px] pr-1 border-t border-[#aca899] mt-px">
    <div className="w-[251px] h-[18px] flex items-center pl-px border border-[#aca899] border-r-white border-b-white">
      <Mixed text="890.7506, 491.5701, 0.0000" />
    </div>
    <div className="flex gap-1">
      {modes.map(([name, on]) => (
        <button
          key={name}
          aria-pressed={on}
          className={
            on
              ? 'h-[18px] px-px leading-4 border border-black border-r-white border-b-white bg-[#f5f3ea]'
              : 'h-[18px] px-px leading-4 border border-white border-r-[#aca899] border-b-[#aca899]'
          }
        >
          {name}
        </button>
      ))}
    </div>
    <div className="ml-auto flex items-center gap-[5px]">
      <div className="w-[23px] h-[18px] flex justify-center border border-[#aca899] border-r-white border-b-white">
        <svg width="18" height="16" viewBox="0 0 18 16" aria-hidden="true">
          <path d="M4 2l6-1 3 4-3 2-1 5 2 3H3l3-3-2-4z" fill="#8d99b8" stroke="#44547c" />
          <path d="M12 5l5.5 10h-11z" fill="#ffe600" stroke="#a08800" />
          <path d="M12 8v4M12 13v1.5" stroke="#000" strokeWidth="1.5" />
        </svg>
      </div>
      <svg width="7" height="4" viewBox="0 0 7 4">
        <path d="M0 0h7L3.5 4z" />
      </svg>
    </div>
  </footer>
);

const Balloon = () => (
  <div
    role="alertdialog"
    aria-label="通信中心"
    className="absolute right-1 bottom-[59px] w-[184px] h-[74px] rounded-[12px] border border-black bg-[#ffffe1] pl-[9px] pr-2 pt-[7px]"
  >
    <div className="flex items-start">
      <svg width="18" height="18" viewBox="0 0 18 18" aria-hidden="true">
        <path d="M8 1a7 6.5 0 1 1 2 13l-1 3-3-3.5A7 6.5 0 0 1 8 1z" fill="#e9f1fb" stroke="#7c96b8" />
        <path d="M9 3v2M7.5 7H9v5M7 12h4" fill="none" stroke="#1646c8" strokeWidth="2" />
      </svg>
      <h2 className="ml-2 font-bold text-[13px] leading-[14px]">通信中心</h2>
      <button aria-label="Close balloon" className="ml-auto size-4 bg-[#ece9d8] border border-[#aca899]">
        <svg viewBox="0 0 14 14" stroke="#000" strokeWidth="2">
          <path d="M3.5 3.5l7 7M10.5 3.5l-7 7" />
        </svg>
      </button>
    </div>
    <div className="pl-[6px] pt-px leading-[18px] whitespace-nowrap">
      <p>使软件保持最新的简单方法。</p>
      <a href="#update" className="text-[#0000ff] underline">
        单击此处。
      </a>
    </div>
    <svg width="40" height="19" viewBox="0 0 40 19" className="absolute left-[122px] top-[71px]" aria-hidden="true">
      <path d="M2 1.5L36 17.5 20 1.5" fill="#ffffe1" stroke="#000" />
      <path d="M2 0h17v2H3z" fill="#ffffe1" />
    </svg>
  </div>
);

const quick = [
  <svg key="desk" width="18" height="18" viewBox="0 0 18 18">
    <path d="M4 1h10l1 10H5z" fill="#7fc0f5" stroke="#e6f3ff" />
    <path d="M5 13h8l2 3H5z" fill="#eef3fa" stroke="#a5bddd" />
  </svg>,
  <svg key="calc" width="18" height="18" viewBox="0 0 18 18">
    <path d="M4 1h10v16H4z" fill="#bdd3f3" stroke="#eaf2fd" />
    <path d="M6 3h6v3H6z" fill="#fff" />
    <path d="M6 8h7M6 11h7M6 14h7" stroke="#4c74b5" strokeWidth="1.5" strokeDasharray="1.5 1" />
  </svg>,
  <svg key="mail" width="18" height="18" viewBox="0 0 18 18">
    <path d="M2 5l10-3 2 12-10 2z" fill="#f4f9ff" stroke="#7fb4e6" />
    <circle cx="9" cy="9.5" r="4" fill="none" stroke="#1678c8" strokeWidth="2" />
    <path d="M8 10l8-8" stroke="#f0a028" strokeWidth="2" />
  </svg>,
];

const tasks: { text: string; icon: React.ReactNode; active?: boolean }[] = [
  {
    text: '基础综合练习07 -...',
    icon: (
      <svg width="16" height="16" viewBox="0 0 16 16">
        <circle cx="8" cy="8" r="7" fill="#4f94e4" stroke="#cfe3fb" />
        <path d="M5 11V6h6v5M8 6v5" stroke="#fff" strokeWidth="1.5" fill="none" />
      </svg>
    ),
  },
  { text: 'AutoCAD 2004 - [...', icon: <AcadLogo />, active: true },
  {
    text: '20080715_ec36520...',
    icon: (
      <svg width="16" height="16" viewBox="0 0 16 16">
        <path d="M0 0h16v16H0z" fill="#000" />
        <path d="M1 1h14v8C11 4 6 4 1 5z" fill="#1f9a34" />
        <path d="M1 8c4-4 10-3 13 5-5 2-10 1-13-5z" fill="#fff" />
        <circle cx="5" cy="9" r="3.5" fill="#2bb0c8" />
        <circle cx="5" cy="9" r="2" />
      </svg>
    ),
  },
  {
    text: '计算器',
    icon: (
      <svg width="16" height="16" viewBox="0 0 16 16">
        <path d="M3 1h10v14H3z" fill="#bdd3f3" stroke="#eaf2fd" />
        <path d="M5 3h6v2H5z" fill="#fff" />
        <path d="M5 7h6M5 10h6M5 13h6" stroke="#3c64a8" strokeWidth="1.5" strokeDasharray="1.5 1" />
      </svg>
    ),
  },
];

const Taskbar = () => (
  <div className="h-[30px] shrink-0 flex items-stretch text-white bg-linear-to-b from-[#3b82ee] via-[#245edb] via-20% to-[#1d4fc4]">
    <button className="w-[97px] shrink-0 flex items-center gap-[9px] pl-[10px] rounded-r-[10px] bg-linear-to-b from-[#67b667] via-[#3c943c] via-25% to-[#2f852f] [box-shadow:inset_-3px_-2px_5px_#1e661e]">
      <svg width="20" height="18" viewBox="0 0 20 18" aria-hidden="true">
        <path d="M3 2c3-1.5 5-1 7 0L8.5 8c-2-1-4-1-7 0z" fill="#f0542a" />
        <path d="M11 2.5c2 1 4 1.2 7 0L16.5 8.500c-3 1-5 1-7 0z" fill="#8cc63a" />
        <path d="M1.2 9c3-1 5-1 7 0L7 15c-2-1-4-1-7 0z" fill="#4f8df0" />
        <path d="M9.2 9.5c2 1 4 1 7 0L15 15.5c-3 1-5 1-7 0z" fill="#fbc927" />
      </svg>
      <span className="italic text-[17px] leading-6 [text-shadow:1px_1px_1px_#134013]">开始</span>
    </button>
    <div className="flex items-center gap-[5px] pl-[11px] w-[85px] shrink-0">
      {quick.map((icon, i) => (
        <button key={i} aria-label={['Desktop', 'Calculator', 'Mail'][i]}>
          {icon}
        </button>
      ))}
    </div>
    <div className="flex gap-[2px] items-center flex-1 min-w-0">
      {tasks.map((t) => (
        <button
          key={t.text}
          className={
            t.active
              ? 'w-[158px] h-6 flex items-center gap-1 pl-2 rounded-[2px] bg-[#1b4cb2] [box-shadow:inset_1px_1px_2px_#0d2f7c]'
              : 'w-[158px] h-6 flex items-center gap-1 pl-2 rounded-[2px] bg-[#3a7ef2] [box-shadow:inset_1px_1px_1px_#6fa5fa,inset_-1px_-1px_1px_#2056c4]'
          }
        >
          {t.icon}
          <span className="whitespace-nowrap">
            <Mixed text={t.text} />
          </span>
        </button>
      ))}
    </div>
    <div className="relative w-[95px] shrink-0 flex items-center pl-[10px] border-l border-[#0d3f9c] bg-linear-to-b from-[#2fb1f5] via-[#1290e9] via-20% to-[#0e7fd8]">
      <button aria-label="Show hidden icons" className="absolute -left-[9px] top-[7px]">
        <svg width="17" height="17" viewBox="0 0 17 17">
          <circle cx="8.5" cy="8.5" r="8" fill="#2c8ee8" stroke="#8cc8fa" />
          <path d="M10 5L6.5 8.5 10 12" stroke="#fff" strokeWidth="2" fill="none" />
        </svg>
      </button>
      <svg width="36" height="16" viewBox="0 0 36 16" aria-hidden="true">
        <path d="M1 1h14v13H1z" fill="#e0151b" />
        <path d="M4 1h2v6l5-6h1L7 8l5 6H9L6 10v4H4z" fill="#fff" />
        <path d="M9 9h6v6H9z" fill="#111" />
        <path d="M10.5 10.5l3 3" stroke="#fff" />
        <path d="M25 2h9v7h-9z" fill="#223a80" stroke="#a5b6d6" />
        <path d="M20 6h9v7h-9zM22 15h6" fill="#3d5aa8" stroke="#c2cfe6" />
      </svg>
      <time className="ml-auto pr-3 font-['DejaVu_Sans_Mono',monospace] text-[10px]">11:00</time>
    </div>
  </div>
);

export default function App() {
  return (
    <div className="relative h-screen flex flex-col overflow-hidden bg-[#ece9d8] text-black text-xs font-['Noto_Sans_CJK_SC',sans-serif]">
      <svg width="0" height="0" className="absolute" aria-hidden="true">
        <defs>
          <linearGradient id="paper" x1="0" y1="0" x2="1" y2="1">
            <stop offset="0" stopColor="#fff" />
            <stop offset="1" stopColor="#a8c3dc" />
          </linearGradient>
        </defs>
      </svg>
      <TitleBar />
      <MenuBar />
      <Toolbars />
      <div className="flex-1 min-h-0 flex">
        <DrawBar />
        <main className="flex-1 min-w-0 flex flex-col ml-px border-t border-l border-[#716f64]">
          <div className="flex-1 min-h-0 flex">
            <div className="flex-1 min-w-0 bg-black overflow-hidden">
              <Drawing />
            </div>
            <VScroll />
          </div>
          <SheetTabs />
        </main>
      </div>
      <CommandPane />
      <StatusBar />
      <Taskbar />
      <Balloon />
    </div>
  );
}
